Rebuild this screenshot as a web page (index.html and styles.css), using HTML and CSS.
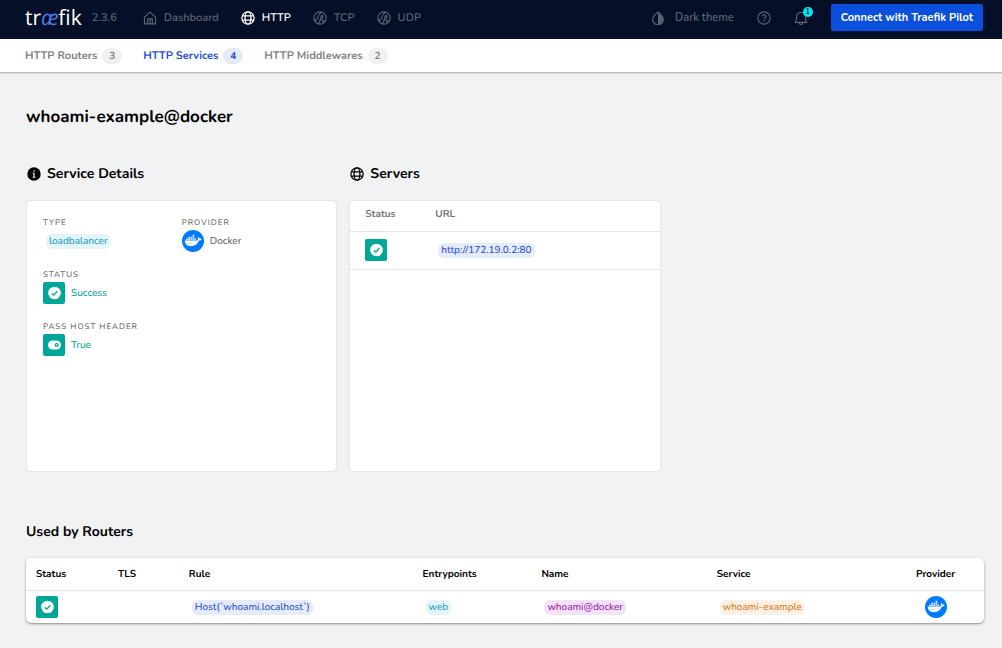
FILE: index.html
```html
<!DOCTYPE html>
<html lang="en">
<head>
<meta charset="utf-8">
<meta name="viewport" content="width=device-width, initial-scale=1">
<title>Traefik - whoami-example@docker</title>
<link rel="stylesheet" href="styles.css">
</head>
<body>
<svg class="sprite" aria-hidden="true">
  <symbol id="globe" viewBox="0 0 24 24"><g fill="none" stroke="currentColor" stroke-width="2.200"><circle cx="12" cy="12" r="10.500"/><ellipse cx="12" cy="12" rx="5" ry="10.500"/><path d="M2.500 8.500h19M2.500 15.500h19"/></g></symbol>
  <symbol id="route" viewBox="0 0 24 24"><g fill="none" stroke="currentColor" stroke-width="2"><circle cx="12" cy="12" r="10.500"/><path d="M2 14.500C4 16.500 7.500 16 8 12.500C8.500 8.500 10 4 15.500 2.500M8.500 21.500C14 20 11.500 8.500 15.500 7.500C18.500 7.500 15 13.500 15.500 16C16 18.500 18.500 18.500 20 16"/></g></symbol>
  <symbol id="home" viewBox="0 0 24 24"><path d="M2.500 10.500L12 2l9.500 8.500V22h-19zM8 22v-8.500h8V22M12 14v8" fill="none" stroke="currentColor" stroke-width="2" stroke-linejoin="round"/></symbol>
  <symbol id="check" viewBox="0 0 22 22"><rect width="22" height="22" rx="2" fill="#00a697"/><circle cx="11.500" cy="11" r="6.300" fill="#fff"/><path d="M8.800 11.200l2 1.900 3.500-3.800" fill="none" stroke="#00a697" stroke-width="1.300"/></symbol>
  <symbol id="toggle" viewBox="0 0 22 22"><rect width="22" height="22" rx="2" fill="#00a697"/><rect x="5" y="6.500" width="13" height="9" rx="4.500" fill="#fff"/><circle cx="13.700" cy="11" r="1.400" fill="#fff" stroke="#00a697" stroke-width="1.300"/></symbol>
  <symbol id="docker" viewBox="0 0 22 22"><circle cx="11" cy="11" r="11" fill="#007bff"/><path d="M2.700 10.600h11.500c1.100 0 1.700-.500 1.900-1.200-.500-.800-.400-1.800.200-2.500.700.400 1.200 1 1.300 1.800.700-.2 1.500-.1 2 .3-.4 1.100-1.400 1.600-2.700 1.600-1.400 3.700-4.100 5.700-8 5.700-3.600 0-6-1.900-6.200-5.700z" fill="#fff"/><path d="M4 8.600h1.800v1.600H4zM6.200 8.600H8v1.600H6.200zM8.400 8.600h1.800v1.600H8.400zM10.600 8.600h1.800v1.600h-1.800zM12.800 8.600h1.500v1.600h-1.500zM6.200 6.700H8v1.600H6.200zM8.400 6.700h1.800v1.600H8.400zM10.600 6.700h1.800v1.600h-1.800zM10.600 4.800h1.800v1.600h-1.800z" fill="#cfe5ff"/><path d="M4.500 13.500c2 .2 3.200-.100 4.500-.800" fill="none" stroke="#8ec4ff" stroke-width=".6"/></symbol>
</svg>

<header class="topbar">
  <a class="logo" href="#">tr<span class="logo-ae">æ</span>fik</a>
  <span class="version">2.3.6</span>
  <nav class="main-nav" aria-label="Main">
    <a class="nav-item" href="#"><svg class="icon"><use href="#home"/></svg>Dashboard</a>
    <a class="nav-item nav-item-active" href="#"><svg class="icon"><use href="#globe"/></svg>HTTP</a>
    <a class="nav-item" href="#"><svg class="icon"><use href="#route"/></svg>TCP</a>
    <a class="nav-item" href="#"><svg class="icon"><use href="#route"/></svg>UDP</a>
  </nav>
  <div class="tools">
    <button class="tool theme" type="button"><svg class="icon" viewBox="0 0 24 24"><path d="M12 1.500L5.500 8a9.200 9.200 0 1 0 13 0z" fill="none" stroke="currentColor" stroke-width="2"/><path d="M12 1.500L18.500 8A9.200 9.200 0 0 1 12 23z" fill="currentColor"/></svg>Dark theme</button>
    <button class="tool" type="button" aria-label="Help"><svg class="icon" viewBox="0 0 24 24"><circle cx="12" cy="12" r="10.500" fill="none" stroke="currentColor" stroke-width="2"/><path d="M8.800 9.300c.2-3.900 6.500-3.700 6.400 0 0 2.400-3.200 2.300-3.200 5M12 16v2.300" fill="none" stroke="currentColor" stroke-width="2"/></svg></button>
    <button class="tool bell" type="button" aria-label="Notifications"><svg class="icon" viewBox="0 0 24 24"><path d="M2 19.500h20c-2-2-2.500-4-2.500-9.500C19.500 5 16 2.500 12 2.500S4.500 5 4.500 10c0 5.500-.5 7.500-2.500 9.500zM8.500 20c.5 4 6.500 4 7 0" fill="none" stroke="currentColor" stroke-width="2" stroke-linejoin="round"/></svg><span class="bell-count">1</span></button>
    <button class="pilot" type="button">Connect with Traefik Pilot</button>
  </div>
</header>

<nav class="tabs" aria-label="HTTP">
  <a class="tab" href="#">HTTP Routers<span class="count">3</span></a>
  <a class="tab tab-active" href="#">HTTP Services<span class="count">4</span></a>
  <a class="tab" href="#">HTTP Middlewares<span class="count">2</span></a>
</nav>

<main class="page">
  <h1 class="title">whoami-example@docker</h1>

  <div class="panels">
    <section class="panel">
      <h2 class="heading"><svg class="icon" viewBox="0 0 24 24"><circle cx="12" cy="12" r="11.500" fill="currentColor"/><path d="M12 5.500v2.700M9.800 10.700H12V18M9.500 17.500h5" fill="none" stroke="#f0f2f5" stroke-width="2"/></svg>Service Details</h2>
      <dl class="card details">
        <div><dt class="label">Type</dt><dd class="value"><span class="chip chip-teal">loadbalancer</span></dd></div>
        <div><dt class="label">Provider</dt><dd class="value"><svg class="badge"><use href="#docker"/></svg>Docker</dd></div>
        <div class="full"><dt class="label">Status</dt><dd class="value value-ok"><svg class="badge"><use href="#check"/></svg>Success</dd></div>
        <div class="full"><dt class="label">Pass Host Header</dt><dd class="value value-ok"><svg class="badge"><use href="#toggle"/></svg>True</dd></div>
      </dl>
    </section>
    <section class="panel">
      <h2 class="heading"><svg class="icon"><use href="#globe"/></svg>Servers</h2>
      <div class="card">
        <table class="table servers">
          <colgroup><col class="col-server-status"><col></colgroup>
          <thead><tr><th>Status</th><th>URL</th></tr></thead>
          <tbody><tr><td><svg class="badge" role="img" aria-label="Success"><use href="#check"/></svg></td><td><span class="chip chip-blue">http://172.19.0.2:80</span></td></tr></tbody>
        </table>
      </div>
    </section>
  </div>

  <section>
    <h2 class="heading">Used by Routers</h2>
    <div class="card-raised">
      <table class="table routers">
        <colgroup><col class="col-status"><col class="col-tls"><col class="col-rule"><col class="col-entry"><col class="col-name"><col class="col-service"><col></colgroup>
        <thead><tr><th>Status</th><th>TLS</th><th>Rule</th><th>Entrypoints</th><th>Name</th><th>Service</th><th>Provider</th></tr></thead>
        <tbody><tr>
          <td><svg class="badge" role="img" aria-label="Success"><use href="#check"/></svg></td>
          <td></td>
          <td><span class="chip chip-blue">Host(`whoami.localhost`)</span></td>
          <td><span class="chip chip-teal">web</span></td>
          <td><span class="chip chip-purple">whoami@docker</span></td>
          <td><span class="chip chip-orange">whoami-example</span></td>
          <td><svg class="badge" role="img" aria-label="Docker"><use href="#docker"/></svg></td>
        </tr></tbody>
      </table>
    </div>
  </section>
</main>
</body>
</html>
```
FILE: styles.css
```css
* { box-sizing: border-box; }
body {
  margin: 0;
  min-height: 100vh;
  background: #f0f2f4;
  color: #000;
  font: 500 10px/16px Nunito, Lato, "Open Sans", sans-serif;
  text-rendering: geometricPrecision;
}
a { color: inherit; text-decoration: none; }
button { font: inherit; color: inherit; background: none; border: 0; padding: 0; cursor: pointer; }
.sprite { position: absolute; width: 0; height: 0; }
.icon { display: block; flex: none; width: 14px; height: 14px; }
.badge { display: block; flex: none; width: 22px; height: 22px; }

.topbar {
  display: flex;
  align-items: center;
  height: 39px;
  padding: 0 19px 4px 25px;
  background: #060f28;
  color: #5b6272;
  font-size: 11px;
  font-weight: 600;
}
.logo { color: #fff; font: 21px/28px "Open Sans", sans-serif; }
.logo-ae { color: #4f7bea; font-style: italic; }
.version { margin-left: 10px; }
.main-nav { display: flex; gap: 22px; margin-left: 26px; }
.nav-item { display: flex; align-items: center; gap: 7px; }
.nav-item-active { color: #fff; }
.tools { display: flex; align-items: center; margin-left: auto; gap: 23px; }
.tool { display: flex; align-items: center; gap: 10px; }
.bell { position: relative; }
.bell-count {
  position: absolute;
  top: -4px;
  right: -5px;
  width: 10px;
  height: 10px;
  border-radius: 5px;
  background: #00eaf5;
  color: #060f28;
  font-size: 8px;
  line-height: 10px;
}
.pilot {
  height: 27px;
  padding: 0 10px;
  border-radius: 2px;
  background: #0b50dc;
  color: #fff;
  font-weight: 700;
}

.tabs {
  display: flex;
  gap: 21px;
  align-items: center;
  height: 34px;
  padding: 0 25px;
  background: #fff;
  border-bottom: 1px solid #bbb;
  box-shadow: 0 1px 1px #ddd;
  color: #828282;
  font-size: 11px;
  font-weight: 700;
}
.tab { display: flex; align-items: center; gap: 5px; }
.count { width: 20px; border-radius: 8px; background: #f0f0f0; font-size: 10px; text-align: center; }
.tab-active { color: #1f4fdb; }
.tab-active .count { background: #e6ebfb; }

.page { padding: 33px 18px 24px 26px; }
.title { margin: 0; font-size: 17px; font-weight: 700; line-height: 24px; }
.heading {
  display: flex;
  align-items: center;
  gap: 6px;
  margin: 0;
  font-size: 14px;
  font-weight: 700;
  line-height: 20px;
}
.panel { display: flex; flex-direction: column; gap: 16px; }
.panel .heading { padding-left: 1px; }
.panels { display: grid; grid-template-columns: repeat(3, 1fr); gap: 12px; margin: 34px 0 50px; }
.card {
  min-height: 272px;
  margin: 0;
  background: #fff;
  border: 1px solid #e3e5e8;
  border-radius: 5px;
}
.details {
  display: grid;
  grid-template-columns: 1fr 1fr;
  align-content: start;
  row-gap: 17px;
  padding: 16px;
}
.full { grid-column: 1 / -1; }
.label { font-size: 8px; line-height: 12px; letter-spacing: 1px; text-transform: uppercase; color: #666; }
.value { display: flex; align-items: center; gap: 6px; height: 22px; margin: 1px 0 0; color: #666; }
.value-ok { color: #00a697; }

.chip { display: inline-block; margin-left: 3px; padding: 0 3px; border-radius: 6px; line-height: 15px; white-space: nowrap; }
.chip-teal { background: #e5f4f9; color: #1c9fc2; }
.chip-blue { background: #e6ebfb; color: #2450d3; }
.chip-purple { background: #f2e4f6; color: #a01ab0; }
.chip-orange { background: #fdf0e4; color: #dc7b1a; }

.table { width: 100%; border-collapse: collapse; table-layout: fixed; }
.table th, .table td { padding: 0; text-align: left; vertical-align: middle; }
.servers th { height: 30px; padding-bottom: 3px; color: #757575; border-bottom: 1px solid #e3e5e8; }
.servers td { height: 38px; border-bottom: 1px solid #e3e5e8; }
.servers th:first-child, .servers td:first-child { padding-left: 15px; }
.col-server-status { width: 85px; }

.card-raised { margin-top: 16px; background: #fff; border-radius: 5px; box-shadow: 0 1px 3px rgba(0, 0, 0, .3), 0 1px 1px rgba(0, 0, 0, .15); }
.routers th { height: 32px; border-bottom: 1px solid #e3e5e8; }
.routers td { height: 33px; }
.routers th:first-child, .routers td:first-child { padding-left: 10px; }
.routers th:last-child { text-align: center; }
.routers td:last-child .badge { margin: 0 auto; }
.col-status { width: 9.6%; }
.col-tls { width: 7.4%; }
.col-rule { width: 24.4%; }
.col-entry { width: 12.4%; }
.col-name { width: 18.3%; }
.col-service { width: 17.8%; }
```
